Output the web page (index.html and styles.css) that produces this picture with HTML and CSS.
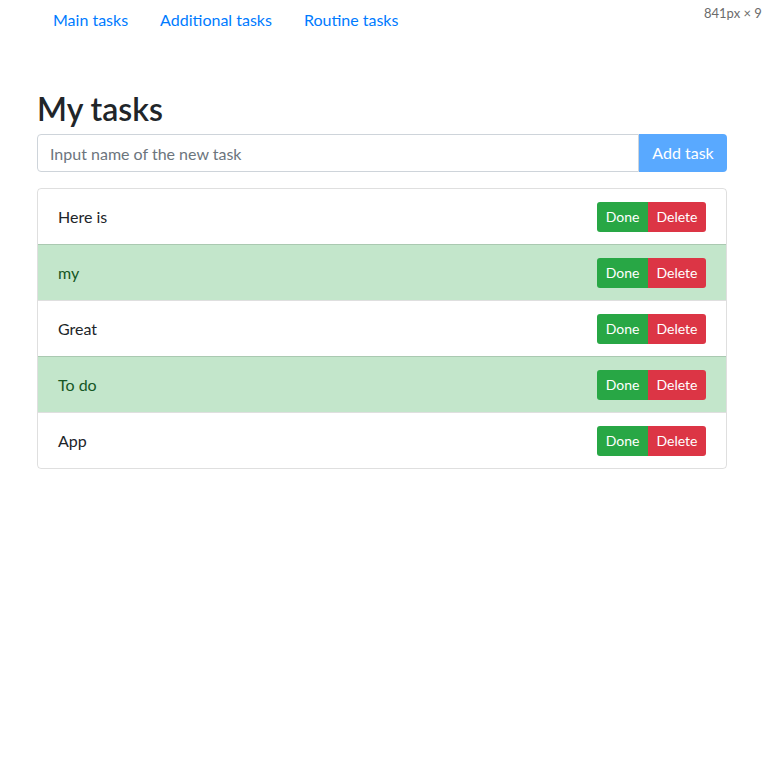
FILE: index.html
```html
<!DOCTYPE html>
<html lang="en">
<head>
<meta charset="utf-8">
<title>My tasks</title>
<link rel="stylesheet" href="styles.css">
</head>
<body>
<div class="devsize">841px × 9</div>
<div class="container">
  <ul class="nav">
    <li><a class="nav-link" href="#">Main tasks</a></li>
    <li><a class="nav-link" href="#">Additional tasks</a></li>
    <li><a class="nav-link" href="#">Routine tasks</a></li>
  </ul>
  <h2 class="title">My tasks</h2>
  <div class="input-group">
    <input class="form-control" type="text" placeholder="Input name of the new task">
    <button class="btn-add" disabled>Add task</button>
  </div>
  <ul class="list-group">
    <li class="list-item"><span>Here is</span><div class="btn-group"><button class="btn btn-done">Done</button><button class="btn btn-delete">Delete</button></div></li>
    <li class="list-item success"><span>my</span><div class="btn-group"><button class="btn btn-done">Done</button><button class="btn btn-delete">Delete</button></div></li>
    <li class="list-item"><span>Great</span><div class="btn-group"><button class="btn btn-done">Done</button><button class="btn btn-delete">Delete</button></div></li>
    <li class="list-item success"><span>To do</span><div class="btn-group"><button class="btn btn-done">Done</button><button class="btn btn-delete">Delete</button></div></li>
    <li class="list-item"><span>App</span><div class="btn-group"><button class="btn btn-done">Done</button><button class="btn btn-delete">Delete</button></div></li>
  </ul>
</div>
</body>
</html>
```
FILE: styles.css
```css
* { box-sizing: border-box; }
html, body { margin: 0; padding: 0; overflow-x: hidden; }
body {
  font-family: Lato, "Open Sans", Arial, sans-serif;
  font-size: 16px;
  line-height: 1.5;
  color: #212529;
  background: #fff;
}
.devsize {
  position: absolute;
  top: 4px;
  left: 704px;
  font-size: 13px;
  color: #6b6b6b;
  white-space: nowrap;
}
.container {
  padding: 0 35px 0 37px;
}
.nav {
  display: flex;
  list-style: none;
  margin: 0;
  padding: 0;
}
.nav-link {
  display: block;
  padding: 8px 16px;
  color: #007bff;
  text-decoration: none;
}
.title {
  margin: 50px 0 6px;
  font-size: 32px;
  font-weight: 600;
  line-height: 1.2;
}
.input-group {
  display: flex;
  margin-bottom: 16px;
}
.form-control {
  flex: 1;
  min-width: 0;
  height: 38px;
  padding: 6px 12px;
  font: inherit;
  color: #495057;
  border: 1px solid #ced4da;
  border-radius: 4px 0 0 4px;
  outline: none;
}
.form-control::placeholder { color: #6c757d; }
.btn-add {
  width: 88px;
  height: 38px;
  font: inherit;
  white-space: nowrap;
  color: #fff;
  background: rgb(89, 169, 255);
  border: 0;
  border-radius: 0 4px 4px 0;
  padding: 6px 0;
}
.list-group {
  list-style: none;
  margin: 0;
  padding: 0;
  border: 1px solid rgba(0,0,0,.125);
  border-radius: 4px;
}
.list-item {
  display: flex;
  align-items: center;
  justify-content: space-between;
  height: 56px;
  padding: 0 20px;
  border-top: 1px solid rgba(0,0,0,.125);
}
.list-item:first-child { border-top: 0; height: 55px; }
.list-item.success {
  background: #c3e6cb;
  color: #155724;
}
.btn-group { display: flex; }
.btn {
  font: inherit;
  font-size: 14px;
  line-height: 1.5;
  color: #fff;
  border: 0;
  height: 30px;
  padding: 0;
}
.btn-done {
  background: #28a745;
  border-radius: 3px 0 0 3px;
  width: 51px;
}
.btn-delete {
  background: #dc3545;
  border-radius: 0 3px 3px 0;
  width: 58px;
}
```
